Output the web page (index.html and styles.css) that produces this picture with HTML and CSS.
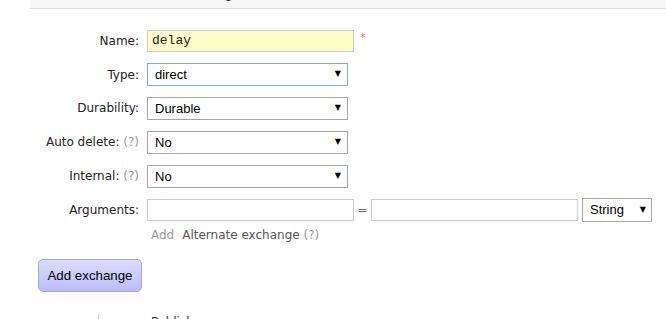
FILE: index.html
```html
<!DOCTYPE html>
<html lang="en">
<head>
  <meta charset="UTF-8">
  <title>Add a new exchange</title>
  <link rel="stylesheet" href="styles.css">
</head>
<body>
  <div class="section-head">
    <h2>Add a new exchange</h2>
  </div>

  <form class="form">
    <div class="row">
      <label class="lbl">Name:</label>
      <div class="ctl">
        <input type="text" class="txt name" value="delay">
        <span class="mand">*</span>
      </div>
    </div>
    <div class="row">
      <label class="lbl">Type:</label>
      <div class="ctl">
        <span class="sel focus"><select><option>direct</option><option>fanout</option><option>headers</option><option>topic</option></select></span>
      </div>
    </div>
    <div class="row">
      <label class="lbl">Durability:</label>
      <div class="ctl">
        <span class="sel"><select><option>Durable</option><option>Transient</option></select></span>
      </div>
    </div>
    <div class="row">
      <label class="lbl">Auto delete: <span class="help">(?)</span></label>
      <div class="ctl">
        <span class="sel"><select><option>No</option><option>Yes</option></select></span>
      </div>
    </div>
    <div class="row">
      <label class="lbl">Internal: <span class="help">(?)</span></label>
      <div class="ctl">
        <span class="sel"><select><option>No</option><option>Yes</option></select></span>
      </div>
    </div>
    <div class="row">
      <label class="lbl">Arguments:</label>
      <div class="ctl">
        <input type="text" class="txt arg">
        <span class="eq">=</span>
        <input type="text" class="txt arg">
        <span class="sel small"><select><option>String</option><option>Number</option><option>Boolean</option><option>List</option></select></span>
      </div>
    </div>
    <div class="row short">
      <span></span>
      <div class="ctl links">
        <span class="muted">Add</span>
        <span class="link">Alternate exchange <span class="help">(?)</span></span>
      </div>
    </div>

    <button type="button" class="btn">Add exchange</button>
  </form>

  <div class="next">
    <h3>Publish message</h3>
  </div>
</body>
</html>
```

FILE: styles.css
```css
/* Page */
body {
  margin: 0;
  background: #fff;
  color: #222;
  font-family: "DejaVu Sans", Verdana, sans-serif;
  font-size: 12px;
  overflow: hidden;
}

/* Collapsed section header at the top */
.section-head {
  margin-left: 30px;
  height: 8px;
  background: #f7f7f7;
  border-bottom: 1px solid #ddd;
  overflow: hidden;
}

.section-head h2 {
  margin: -13px 0 0 85px;
  font-size: 12px;
  font-weight: normal;
  color: #333;
}

/* Form rows */
.form {
  padding-top: 15px;
}

.row {
  display: grid;
  grid-template-columns: 139px auto;
  column-gap: 8px;
  align-items: center;
  height: 33.8px;
}

.row.short {
  height: 18px;
  margin-top: -1px;
}

.lbl {
  text-align: right;
  color: #222;
}

.help {
  color: #999;
}

.ctl {
  display: flex;
  align-items: center;
}

/* Text inputs */
.txt {
  box-sizing: border-box;
  height: 22px;
  border: 1px solid #ccc;
  padding: 0 4px;
  margin: 0;
  outline: none;
}

.name {
  width: 207px;
  background: #fbfcc7;
  font-family: "Liberation Mono", "Courier New", monospace;
  font-size: 13px;
  color: #222;
}

.arg {
  width: 207px;
  background: #fff;
}

.mand {
  color: #f07070;
  font-size: 11px;
  margin-left: 6px;
  margin-top: -6px;
}

.eq {
  width: 17px;
  text-align: center;
  color: #666;
}

/* Selects with the old arrow glyph */
.sel {
  position: relative;
  display: inline-block;
}

.sel select {
  appearance: none;
  -webkit-appearance: none;
  box-sizing: border-box;
  width: 201px;
  height: 23px;
  margin: 0;
  padding: 0 20px 0 7px;
  border: 1px solid #a6a6a6;
  border-radius: 0;
  background: #fff;
  color: #000;
  font-family: "Liberation Sans", Arial, sans-serif;
  font-size: 13px;
}

.sel.focus select {
  border-color: #7ea6e0;
}

.sel::after {
  content: "\25BC";
  position: absolute;
  right: 7px;
  top: 6px;
  font-family: "DejaVu Sans", sans-serif;
  font-size: 8px;
  color: #000;
  pointer-events: none;
}

.sel.small {
  margin-left: 4px;
}

.sel.small select {
  width: 70px;
  height: 24px;
  padding-left: 7px;
}

.sel.small::after {
  right: 6px;
  top: 7px;
}

/* Add / alternate exchange links */
.links {
  padding-left: 4px;
}

.muted {
  color: #999;
  margin-right: 8px;
}

.link {
  color: #555;
}

/* Submit button */
.btn {
  margin: 15px 0 0 38px;
  width: 104px;
  height: 33px;
  padding: 0;
  border: 1px solid #a8a3ee;
  border-radius: 5px;
  background: linear-gradient(#ddddfd, #bcbcfb);
  color: #000;
  font-family: "Liberation Sans", Arial, sans-serif;
  font-size: 13.3px;
}

/* Next collapsed section, mostly below the fold */
.next {
  margin: 22px 0 0 98px;
  padding-top: 1px;
  border-left: 1px solid #ccc;
  height: 30px;
}

.next h3 {
  margin: 0 0 0 52px;
  font-size: 12px;
  font-weight: normal;
  color: #333;
}
```
